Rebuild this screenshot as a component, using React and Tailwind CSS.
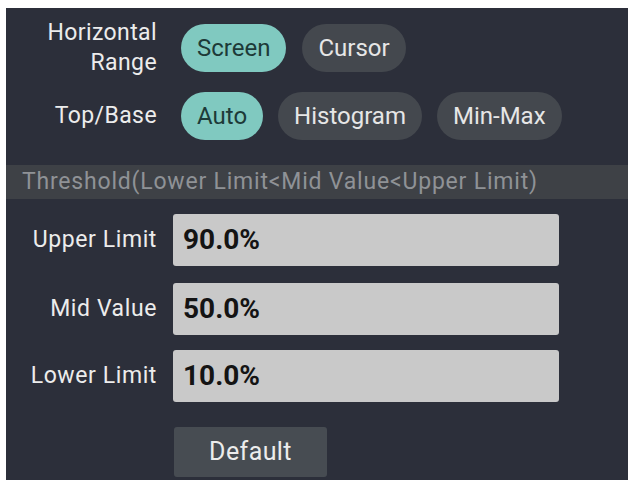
import { useState } from 'react';

const font = { fontFamily: 'Roboto, "Noto Sans", sans-serif' };

const Pill = ({ active, children, onClick }) => (
  <button
    onClick={onClick}
    className={`h-[48px] rounded-full px-[16px] text-[24px] leading-none ${
      active ? 'bg-[#80c9c0] text-[#1d3a38]' : 'bg-[#44484e] text-[#e6e6e6]'
    }`}
  >
    {children}
  </button>
);

const LimitRow = ({ label, value, className }) => (
  <div className={`flex items-center ${className}`}>
    <div className="w-[151px] text-right text-[23px] tracking-[0.6px] text-[#ececec]">{label}</div>
    <div className="ml-[16px] flex h-[52px] w-[386px] items-center rounded-[3px] bg-[#c9c9c9] pl-[10px] text-[28px] font-bold text-[#141414]">
      {value}
    </div>
  </div>
);

export default function App() {
  const [range, setRange] = useState('Screen');
  const [topBase, setTopBase] = useState('Auto');

  return (
    <div className="h-[487px] w-[634px] bg-white pl-[6px] pr-[6px] pt-[8px]" style={font}>
      <div className="flex h-[472px] flex-col bg-[#2c2f3a] pt-[10px]">
        {/* range selection */}
        <div className="flex h-[60px] items-center">
          <div className="w-[151px] text-right text-[23px] leading-[30px] tracking-[0.4px] text-[#ececec]">
            Horizontal
            <br />
            Range
          </div>
          <div className="ml-[24px] flex gap-[16px]">
            {['Screen', 'Cursor'].map((r) => (
              <Pill key={r} active={range === r} onClick={() => setRange(r)}>
                {r}
              </Pill>
            ))}
          </div>
        </div>

        <div className="mt-[14px] flex h-[48px] items-center">
          <div className="w-[151px] text-right text-[23px] tracking-[0.4px] text-[#ececec]">Top/Base</div>
          <div className="ml-[24px] flex gap-[15px]">
            {['Auto', 'Histogram', 'Min-Max'].map((t) => (
              <Pill key={t} active={topBase === t} onClick={() => setTopBase(t)}>
                {t}
              </Pill>
            ))}
          </div>
        </div>

        {/* threshold section */}
        <div className="mt-[25px] flex h-[34px] items-center bg-[#3e4146] pl-[16px] text-[23px] tracking-[0.8px] text-[#8f9296]">
          Threshold(Lower Limit&lt;Mid Value&lt;Upper Limit)
        </div>

        <LimitRow label="Upper Limit" value="90.0%" className="mt-[15px]" />
        <LimitRow label="Mid Value" value="50.0%" className="mt-[17px]" />
        <LimitRow label="Lower Limit" value="10.0%" className="mt-[15px]" />

        <div className="mt-[25px] flex">
          <button className="ml-[168px] h-[50px] w-[153px] rounded-[3px] bg-[#474c52] text-[25px] tracking-[0.4px] text-[#ececec]">
            Default
          </button>
        </div>
      </div>
    </div>
  );
}
